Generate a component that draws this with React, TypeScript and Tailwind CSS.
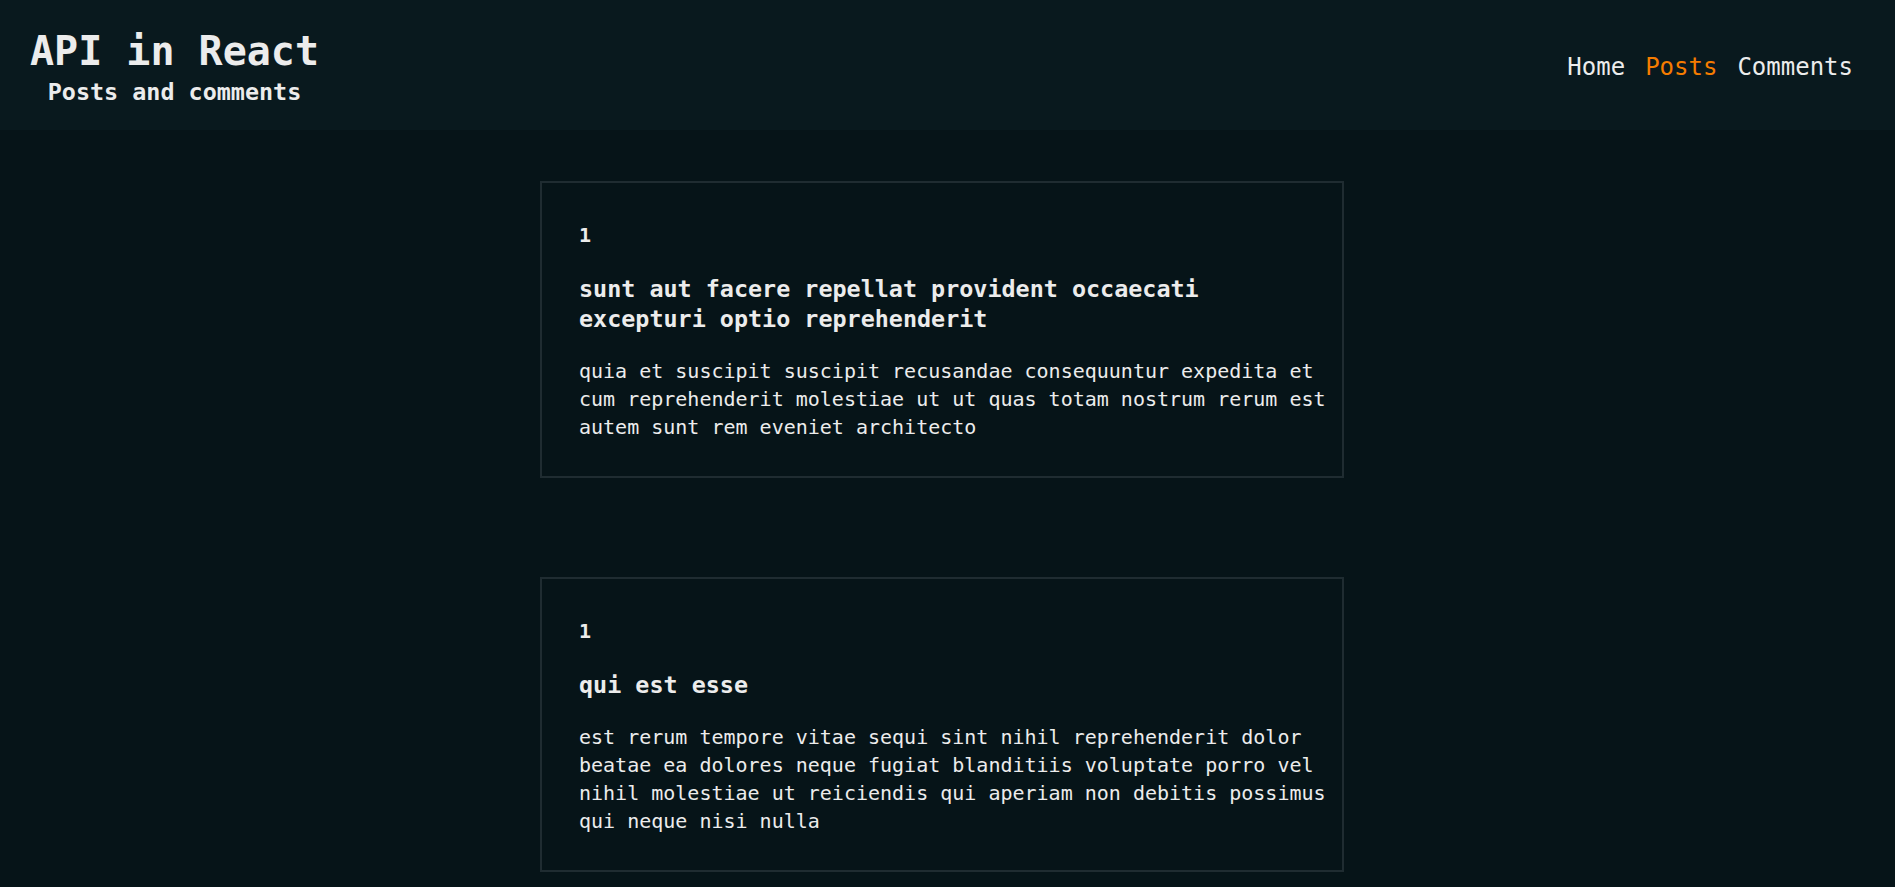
import React from "react";

const posts = [
  {
    id: 1,
    title: "sunt aut facere repellat provident occaecati excepturi optio reprehenderit",
    body: "quia et suscipit suscipit recusandae consequuntur expedita et cum reprehenderit molestiae ut ut quas totam nostrum rerum est autem sunt rem eveniet architecto",
  },
  {
    id: 1,
    title: "qui est esse",
    body: "est rerum tempore vitae sequi sint nihil reprehenderit dolor beatae ea dolores neque fugiat blanditiis voluptate porro vel nihil molestiae ut reiciendis qui aperiam non debitis possimus qui neque nisi nulla",
  },
];

export default function App() {
  return (
    <div
      className="min-h-screen bg-[#061418] text-[#ececec]"
      style={{ fontFamily: '"DejaVu Sans Mono", "Liberation Mono", monospace' }}
    >
      <header className="flex h-[130px] items-center justify-between bg-[#09191e] pt-[3px] pl-[30px] pr-[42px]">
        <div className="flex flex-col items-center">
          <h1 className="text-[40px] font-bold leading-[48px]">API in React</h1>
          <h3 className="mt-[3px] text-[23.4px] font-bold leading-[28px]">Posts and comments</h3>
        </div>
        <nav className="flex gap-[20px] text-[24px] leading-[28px]">
          <a className="text-[#ececec]">Home</a>
          <a className="text-[#f57c00]">Posts</a>
          <a className="text-[#ececec]">Comments</a>
        </nav>
      </header>
      <main className="flex flex-col gap-[99px] pt-[51px] pb-[20px] pl-[540px]">
        {posts.map((p, i) => (
          <article
            key={i}
            className="w-[804px] border-2 border-[#1f2c31] pt-[40px] pb-[35px] pl-[37px] pr-[12px]"
          >
            <h4 className="text-[20px] font-bold leading-[24px]">{p.id}</h4>
            <h3 className="mt-[27px] text-[23.4px] font-bold leading-[30px]">{p.title}</h3>
            <p className="mt-[23px] text-[20px] leading-[28px]">{p.body}</p>
          </article>
        ))}
      </main>
    </div>
  );
}
